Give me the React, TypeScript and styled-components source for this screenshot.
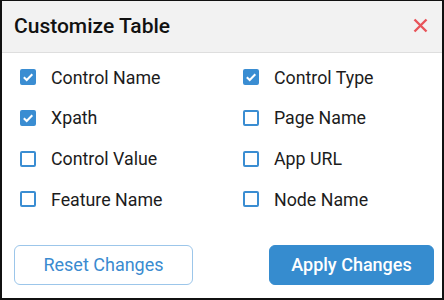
import React, { useState } from "react";
import styled, { createGlobalStyle } from "styled-components";

const Global = createGlobalStyle`
  html, body { margin: 0; padding: 0; background: #fff; }
  * { box-sizing: border-box; }
`;

const Dialog = styled.div`
  width: 444px;
  height: 300px;
  border: 2px solid #111;
  border-top-width: 1px;
  background: #fff;
  font-family: Roboto, "Liberation Sans", sans-serif;
  display: flex;
  flex-direction: column;
`;

const Header = styled.div`
  height: 52px;
  flex: none;
  background: #f2f2f2;
  border-bottom: 1px solid #dedede;
  display: flex;
  align-items: center;
  justify-content: space-between;
  padding: 0 13px 2px 12px;
`;

const Title = styled.h1`
  margin: 0;
  font-size: 21px;
  font-weight: 500;
  color: #111;
`;

const Close = styled.button`
  border: 0;
  background: none;
  padding: 0;
  width: 18px;
  height: 18px;
  display: flex;
  align-items: center;
  justify-content: center;
  cursor: pointer;
`;

const Grid = styled.div`
  display: grid;
  grid-template-columns: 223px 1fr;
  grid-auto-rows: 40.67px;
  padding: 4px 0 0 18px;
`;

const Option = styled.label`
  display: flex;
  align-items: center;
  gap: 15px;
  font-size: 17.8px;
  color: #1c1c1c;
  cursor: pointer;
`;

const Box = styled.span<{ $checked: boolean }>`
  width: 16px;
  height: 16px;
  border-radius: 2px;
  flex: none;
  display: flex;
  align-items: center;
  justify-content: center;
  background: ${(p) => (p.$checked ? "#3a8dd2" : "#fff")};
  border: 2px solid #3a8dd2;
`;

const Footer = styled.div`
  display: flex;
  justify-content: space-between;
  padding: 0 8px 0 12px;
  margin-top: 25px;
`;

const Button = styled.button<{ $primary?: boolean }>`
  height: 40px;
  width: ${(p) => (p.$primary ? "165px" : "179px")};
  border-radius: 6px;
  font-family: Roboto, "Liberation Sans", sans-serif;
  font-size: 18px;
  font-weight: ${(p) => (p.$primary ? 500 : 400)};
  color: ${(p) => (p.$primary ? "#fff" : "#3a8bd0")};
  background: ${(p) => (p.$primary ? "#368ccf" : "#fff")};
  border: 1px solid ${(p) => (p.$primary ? "#368ccf" : "#9cc6ea")};
  cursor: pointer;
`;

const items: [string, boolean][] = [
  ["Control Name", true],
  ["Control Type", true],
  ["Xpath", true],
  ["Page Name", false],
  ["Control Value", false],
  ["App URL", false],
  ["Feature Name", false],
  ["Node Name", false],
];

export default function App() {
  const [state, setState] = useState(items.map((i) => i[1]));
  return (
    <>
      <Global />
      <Dialog>
        <Header>
          <Title>Customize Table</Title>
          <Close aria-label="Close">
            <svg width="15" height="15" viewBox="0 0 15 15">
              <path d="M1.5 1.5 L13.5 13.5 M13.5 1.5 L1.5 13.5" stroke="#e8545a" strokeWidth="2.4" strokeLinecap="butt" />
            </svg>
          </Close>
        </Header>
        <Grid>
          {items.map(([name], i) => (
            <Option key={name} onClick={() => setState((s) => s.map((v, j) => (j === i ? !v : v)))}>
              <Box $checked={state[i]}>
                {state[i] && (
                  <svg width="12" height="12" viewBox="0 0 12 12">
                    <path d="M1.8 6.2 L4.7 9 L10.3 3.2" stroke="#fff" strokeWidth="2" fill="none" />
                  </svg>
                )}
              </Box>
              {name}
            </Option>
          ))}
        </Grid>
        <Footer>
          <Button>Reset Changes</Button>
          <Button $primary>Apply Changes</Button>
        </Footer>
      </Dialog>
    </>
  );
}
